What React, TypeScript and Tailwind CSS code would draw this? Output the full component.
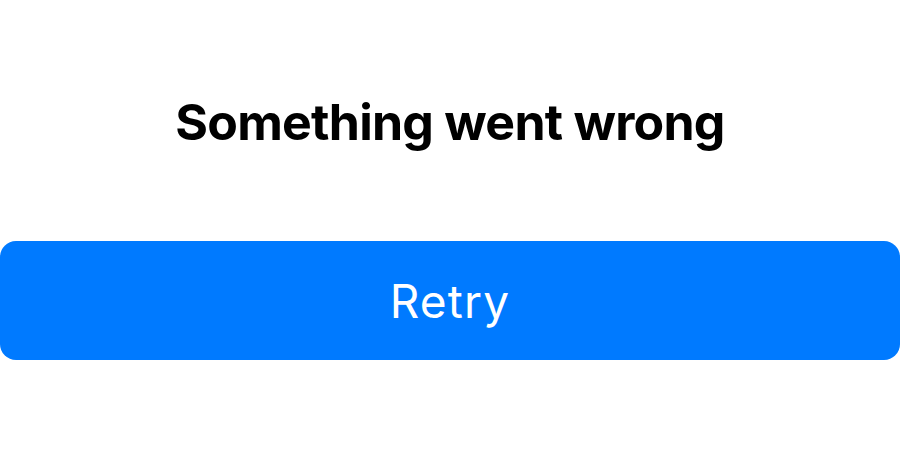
export default function App() {
  return (
    <div className="w-[900px] h-[450px] bg-white flex flex-col items-center" style={{ fontFamily: 'Inter, "Noto Sans", sans-serif' }}>
      <h1 className="mt-[92px] text-[50px] leading-[60px] font-bold text-black tracking-[-0.75px]">Something went wrong</h1>
      <button className="mt-[89px] w-full h-[119px] rounded-[16px] bg-[#007AFF] text-white text-[46px] leading-none font-normal tracking-[1.2px]">Retry</button>
    </div>
  );
}
